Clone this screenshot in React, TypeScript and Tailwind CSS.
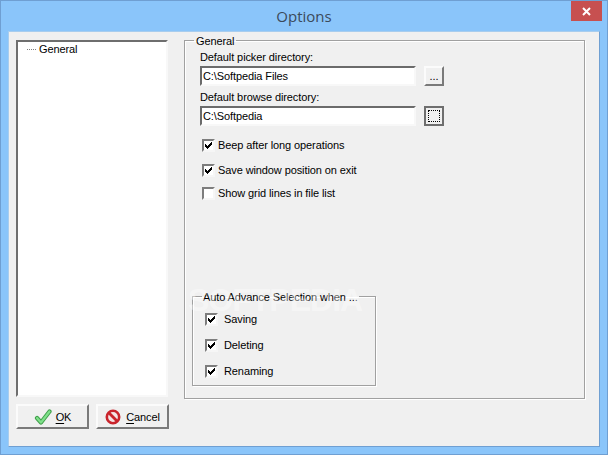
function Check({ checked }: { checked: boolean }) {
  return (
    <span className="flex h-[13px] w-[13px] shrink-0 items-center justify-center border-2 border-t-[#7d7d7d] border-l-[#7d7d7d] border-r-[#f6f6f6] border-b-[#f6f6f6] bg-white">
      {checked && (
        <svg width="9" height="9" viewBox="0 0 9 9" className="block" shapeRendering="crispEdges">
          <path d="M1 3 H2 V4 H3 V5 H4 V4 H5 V3 H6 V2 H7 V1 H8 V4 H7 V5 H6 V6 H5 V7 H4 V8 H3 V7 H2 V6 H1 Z" fill="#000" />
        </svg>
      )}
    </span>
  );
}

function CheckRow({ label, checked, gap, className }: { label: string; checked: boolean; gap: string; className: string }) {
  return (
    <div className={`flex h-[14px] items-center ${gap} ${className}`}>
      <Check checked={checked} />
      <span>{label}</span>
    </div>
  );
}

function PathRow({ value, focused }: { value: string; focused?: boolean }) {
  return (
    <div className="flex h-[20px] gap-[8px]">
      <div className="flex h-[20px] w-[216px] items-center border-2 border-t-[#6b6b6b] border-l-[#6b6b6b] border-r-[#f8f8f8] border-b-[#f8f8f8] bg-white pl-[1px]">
        {value}
      </div>
      {focused ? (
        <div className="flex h-[20px] w-[20px] items-center justify-center border-2 border-[#6e6e6e] bg-[#f0f0f0]">
          <div className="h-[12px] w-[12px] border border-dotted border-black" />
        </div>
      ) : (
        <div className="flex h-[20px] w-[20px] items-start justify-center border-2 border-t-[#fbfbfb] border-l-[#fbfbfb] border-r-[#7a7a7a] border-b-[#7a7a7a] bg-[#f0f0f0] pt-[1px] leading-[14px]">
          ...
        </div>
      )}
    </div>
  );
}

function OkIcon() {
  return (
    <svg width="18" height="18" viewBox="0 0 18 18" className="block">
      <path d="M3 10 L7 14.5 L15.5 3.5" fill="none" stroke="#3f9f4a" strokeWidth="4.2" strokeLinecap="round" strokeLinejoin="round" />
      <path d="M3 10 L7 14.5 L15.5 3.5" fill="none" stroke="#7fe08a" strokeWidth="2.2" strokeLinecap="round" strokeLinejoin="round" />
    </svg>
  );
}

function CancelIcon() {
  return (
    <svg width="16" height="16" viewBox="0 0 16 16" className="block">
      <circle cx="8" cy="8" r="6.2" fill="#f4e4e4" stroke="#c9242c" strokeWidth="2.6" />
      <path d="M3.8 3.8 L12.2 12.2" stroke="#c9242c" strokeWidth="2.8" />
    </svg>
  );
}

function DlgButton({ icon, first, rest, gap }: { icon: React.ReactNode; first: string; rest: string; gap: string }) {
  return (
    <div className={`flex h-[25px] w-[73px] items-center justify-center ${gap} border-2 border-t-[#fbfbfb] border-l-[#fbfbfb] border-r-[#7a7a7a] border-b-[#7a7a7a] bg-[#f0f0f0]`}>
      {icon}
      <span>
        <span className="underline underline-offset-2">{first}</span>
        {rest}
      </span>
    </div>
  );
}

export default function App() {
  return (
    <div className="relative flex h-[455px] w-[608px] flex-col border border-[#6f9fd2] bg-[#8ac5fa] font-['Liberation_Sans',sans-serif] text-[11px] leading-[14px] tracking-[-0.1px] text-black">
      <div className="flex h-[29px] shrink-0 items-center justify-center font-['Open_Sans',sans-serif] text-[15px] tracking-normal text-[#3b4a5a]">
        Options
      </div>
      <div className="absolute right-[5px] top-0 flex h-[20px] w-[31px] items-center justify-center bg-[#c75050]">
        <svg width="9" height="9" viewBox="0 0 9 9" className="block">
          <path d="M1 1 L8 8 M8 1 L1 8" stroke="#fff" strokeWidth="2" />
        </svg>
      </div>
      <div className="mx-[7px] mt-[1px] flex h-[416px] gap-[15px] border border-[#6f9fd2] border-t-[#a8cdee] border-l-[#a8cdee] bg-[#f0f0f0] pl-[7px]">
        <div className="flex w-[153px] flex-col gap-[7px] pt-[8px]">
          <div className="flex h-[357px] w-[152px] items-start gap-[3px] border-2 border-t-[#6e6e6e] border-l-[#6e6e6e] border-r-[#f8f8f8] border-b-[#f8f8f8] bg-white pl-[9px]">
            <div className="mt-[7px] h-0 w-[9px] border-t border-dotted border-[#808080]" />
            <span>General</span>
          </div>
          <div className="flex gap-[7px]">
            <DlgButton icon={<OkIcon />} first="O" rest="K" gap="gap-[4px]" />
            <DlgButton icon={<CancelIcon />} first="C" rest="ancel" gap="gap-[5px]" />
          </div>
        </div>
        <fieldset className="h-[367px] w-[401px] border border-[#a0a0a0] shadow-[1px_1px_0_#fff,inset_1px_1px_0_#fff]">
          <legend className="ml-[9px] px-[2px] pt-[2px]">General</legend>
          <div className="flex flex-col pl-[15px] pt-[2px]">
            <div className="mb-[2px] h-[14px]">Default picker directory:</div>
            <PathRow value="C:\Softpedia Files" />
            <div className="mb-[2px] mt-[4px] h-[14px]">Default browse directory:</div>
            <PathRow value="C:\Softpedia" focused />
            <CheckRow label="Beep after long operations" checked gap="gap-[3px]" className="ml-[2px] mt-[12px]" />
            <CheckRow label="Save window position on exit" checked gap="gap-[3px]" className="ml-[2px] mt-[11px]" />
            <CheckRow label="Show grid lines in file list" checked={false} gap="gap-[3px]" className="ml-[2px] mt-[9px]" />
            <fieldset className="-ml-[8px] mt-[88px] h-[98px] w-[184px] border border-[#a0a0a0] shadow-[1px_1px_0_#fff,inset_1px_1px_0_#fff]">
              <legend className="ml-[9px] px-[1px] pt-[2px]">Auto Advance Selection when ...</legend>
              <div className="flex flex-col gap-[12px] pl-[12px] pt-[8px]">
                <CheckRow label="Saving" checked gap="gap-[6px]" className="" />
                <CheckRow label="Deleting" checked gap="gap-[6px]" className="" />
                <CheckRow label="Renaming" checked gap="gap-[6px]" className="" />
              </div>
            </fieldset>
          </div>
        </fieldset>
      </div>
      <div className="pointer-events-none absolute left-[187px] top-[279px] text-[32px] font-bold leading-[40px] tracking-[-1px] text-white/40">
        SOFTPEDIA
      </div>
    </div>
  );
}
